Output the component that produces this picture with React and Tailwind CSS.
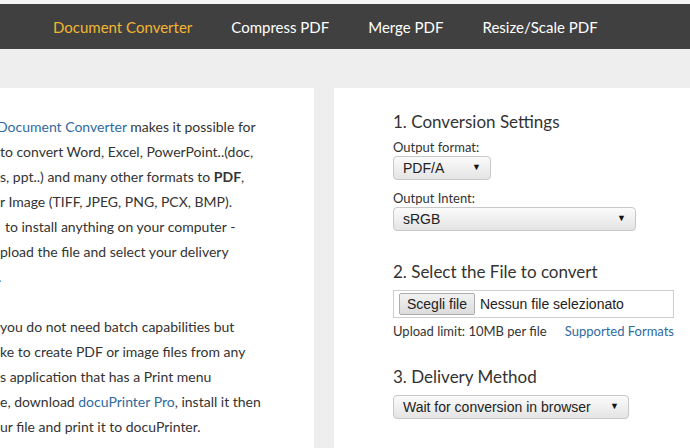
import React from "react";

const navItems = ["Document Converter", "Compress PDF", "Merge PDF", "Resize/Scale PDF"];

function Select({ value, width }) {
  return (
    <div
      className={`flex items-center justify-between h-[24px] ${width} rounded-[4px] border border-[#c8c8c8] bg-gradient-to-b from-[#fbfbfb] to-[#e4e4e4] pl-[9px] pr-[9px] text-[14px] text-[#222]`}
      style={{ fontFamily: '"Liberation Sans", Arial, sans-serif' }}
    >
      <span>{value}</span>
      <span className="text-[9px] text-[#111]">▼</span>
    </div>
  );
}

export default function App() {
  const link = "text-[#2f6aa0]";
  return (
    <div
      className="w-[690px] h-[448px] overflow-hidden bg-[#eeeeee] text-[#333]"
      style={{ fontFamily: 'Lato, "Noto Sans", sans-serif' }}
    >
      <div className="h-[4px] bg-[#f5f5f5]" />
      {/* NAV */}
      <div className="h-[45px] bg-[#404040] flex items-center pl-[53px] gap-[39px] text-[15px] pt-[2px]">
        {navItems.map((n, i) => (
          <span key={n} className={i === 0 ? "text-[#f2b632]" : "text-white"}>
            {n}
          </span>
        ))}
      </div>

      <div className="flex pt-[39px] gap-[20px]">
        {/* LEFT */}
        <div className="w-[314px] h-[400px] bg-white overflow-hidden shrink-0 pt-[26px] text-[14px] leading-[25px] whitespace-nowrap">
          <div className="ml-[-3px]">
            <span className={link}>Document Converter</span> makes it possible for
          </div>
          <div>to convert Word, Excel, PowerPoint..(doc,</div>
          <div>s, ppt..) and many other formats to <b>PDF</b>,</div>
          <div>r Image (TIFF, JPEG, PNG, PCX, BMP).</div>
          <div className="ml-[5px]">to install anything on your computer -</div>
          <div>pload the file and select your delivery</div>
          <div className="ml-[-2px]">.</div>
          <div className="h-[25px]" />
          <div>you do not need batch capabilities but</div>
          <div>ke to create PDF or image files from any</div>
          <div>s application that has a Print menu</div>
          <div>
            e, download <span className={link}>docuPrinter Pro</span>, install it then
          </div>
          <div>ur file and print it to docuPrinter.</div>
        </div>

        {/* RIGHT */}
        <div className="w-[356px] h-[400px] bg-white shrink-0 pl-[59px] pt-[22px]">
          <div className="text-[17px] leading-[24px]">1. Conversion Settings</div>
          <div className="text-[13px] leading-[18px] mt-[4px]">Output format:</div>
          <Select value="PDF/A" width="w-[98px]" />
          <div className="text-[13px] leading-[18px] mt-[9px]">Output Intent:</div>
          <Select value="sRGB" width="w-[243px]" />

          <div className="text-[17px] leading-[24px] mt-[29px]">2. Select the File to convert</div>
          <div
            className="mt-[6px] w-[281px] h-[28px] border border-[#cfcfcf] flex items-center pl-[5px] gap-[5px] text-[14px] text-[#222]"
            style={{ fontFamily: '"Liberation Sans", Arial, sans-serif' }}
          >
            <span className="h-[22px] px-[7px] flex items-center border border-[#adadad] rounded-[2px] bg-gradient-to-b from-[#f2f2f2] to-[#dcdcdc]">
              Scegli file
            </span>
            <span>Nessun file selezionato</span>
          </div>
          <div className="flex justify-between w-[281px] text-[13px] leading-[18px] mt-[4px]">
            <span>Upload limit: 10MB per file</span>
            <span className={link}>Supported Formats</span>
          </div>

          <div className="text-[17px] leading-[24px] mt-[25px]">3. Delivery Method</div>
          <div className="mt-[6px]">
            <Select value="Wait for conversion in browser" width="w-[236px]" />
          </div>
        </div>
      </div>
    </div>
  );
}
